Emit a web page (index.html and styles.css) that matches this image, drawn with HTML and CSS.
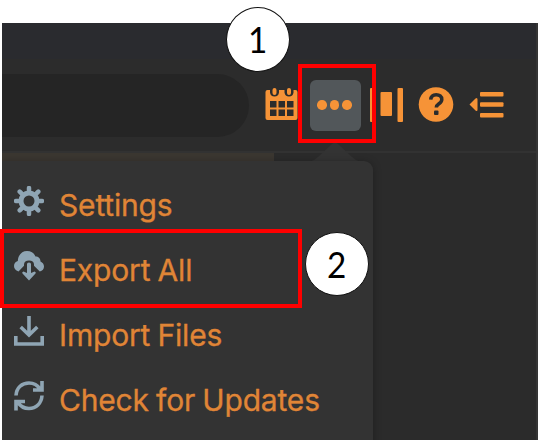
FILE: index.html
```html
<!DOCTYPE html>
<html lang="en">
<head>
<meta charset="utf-8">
<title>Toolbar menu</title>
<link rel="stylesheet" href="styles.css">
</head>
<body>
<div class="app">
  <div class="titlebar"></div>
  <header class="toolbar">
    <div class="search"></div>
    <svg class="icon calendar" width="34" height="36" viewBox="0 0 34 36">
      <path fill="#f69337" fill-rule="evenodd" d="M2.500 3H5v2.500q.5 4 4.500 4t4.500-4V3h5.500v2.500q.5 4 4.500 4t4.500-4V3h2q2 0 2 2v26q0 2-2 2h-28q-2 0-2-2V5q0-2 2-2zM5 14v6.500h6.500V14zM13.500 14v6.500h6.500V14zM22 14v6.500h6.500V14zM5 22.500v6.500h6.500v-6.500zM13.500 22.500v6.500h6.500v-6.500zM22 22.500v6.500h6.500v-6.500z"/>
      <path stroke="#f69337" stroke-width="4" stroke-linecap="round" d="M9.500 3v3M24 3v3"/>
    </svg>
    <button class="more" aria-label="More"><i></i><i></i><i></i></button>
    <svg class="icon panels" width="34" height="36" viewBox="0 0 34 36" fill="#f69337">
      <rect width="5" height="34" x="0" y="1" rx="1"/><rect width="11.500" height="24" x="10.500" y="5" rx="1"/><rect width="5.500" height="34" x="27.500" y="1" rx="1"/>
    </svg>
    <svg class="icon help" width="36" height="36" viewBox="0 0 36 36">
      <circle cx="18" cy="17.500" r="17.300" fill="#f69337"/>
      <path d="M12.700 12.700c.3-3.500 2.700-5 5.500-5 3.300 0 5.600 1.700 5.600 4.700 0 4.600-5.500 4.100-5.500 8.100" fill="none" stroke="#2b2c2d" stroke-width="3.500"/>
      <rect x="16" y="23.500" width="4.500" height="4.500" rx="1" fill="#2b2c2d"/>
    </svg>
    <svg class="icon outdent" width="36" height="36" viewBox="0 0 36 36" fill="#f69337">
      <path d="M.5 17.500 6.500 11.500q2-1.500 2 1v10q0 2.500-2 1z"/>
      <rect x="11" y="5" width="23.500" height="4.500" rx="1"/><rect x="11" y="15.300" width="23.500" height="4.500" rx="1"/><rect x="11" y="26" width="23.500" height="4.500" rx="1"/>
    </svg>
  </header>
  <div class="content"><div class="strip"></div></div>
  <svg class="arrow" width="52" height="21" viewBox="0 0 52 21"><path fill="#333" d="M0 21q5-1 9-5L23 3q3-3 6 0l14 13q4 4 9 5z"/></svg>
  <nav class="menu">
    <a class="item">
      <svg width="30" height="30" viewBox="0 0 30 30"><g stroke="#8fa5b4" fill="none"><circle cx="15" cy="15" r="8" stroke-width="5"/><path stroke-width="4.500" stroke-linecap="round" d="M15 2v4M15 24v4M2 15h4M24 15h4M5.700 5.700l3 3M21.300 21.300l3 3M24.300 5.700l-3 3M8.700 21.300l-3 3"/></g></svg>
      <span>Settings</span>
    </a>
    <a class="item">
      <svg width="30" height="30" viewBox="0 0 30 30" fill="#8fa5b4"><path d="M4.500 20.500C1.500 19.500 0 17.500 0 15c0-2.500 1.500-4.500 3.800-5C4 4 8 0 13 0c4 0 7 2 8.500 5.500 3 0 5 2 5 5 2.200 1 3.500 2.700 3.500 5 0 2.600-1.500 4.500-4.200 5L20 14.800v-1.200C20 11 18 9.500 15 9.500s-5 1.500-5 4.100v1.200z"/><path d="M13 13q0-1.500 2-1.500t2 1.500v9l3.500-1.500q2 .5 1 2L15 29.500 8.500 22.500q-1-1.500 1-2L13 22z"/></svg>
      <span>Export All</span>
    </a>
    <a class="item">
      <svg width="30" height="30" viewBox="0 0 30 30" fill="none" stroke="#8fa5b4" stroke-width="3.600"><path d="M15 0v18M6.700 11l8.300 8 8.300-8M1.800 20v8h26.400v-8"/></svg>
      <span>Import Files</span>
    </a>
    <a class="item">
      <svg width="30" height="30" viewBox="0 0 30 30" fill="none" stroke="#8fa5b4" stroke-width="3.600"><path d="M2 14.500C2.500 6.500 8 2 15 2c5 0 8.500 2 11 6M28 0v9h-9M28 14.500C27.500 22.500 22 27.500 15 27.500c-5 0-8.500-2-11-6M2 29.500v-9h9"/></svg>
      <span>Check for Updates</span>
    </a>
  </nav>
</div>
<div class="outline outline-more"></div>
<div class="outline outline-export"></div>
<div class="step step-one"><span>1</span></div>
<div class="step step-two"><span>2</span></div>
</body>
</html>
```
FILE: styles.css
```css
* { box-sizing: border-box; }
body {
  margin: 0;
  height: 440px;
  overflow: hidden;
  position: relative;
  background: #fff;
  font-family: Inter, sans-serif;
}
.app {
  position: relative;
  margin: 23px 0 0 2px;
  width: 536px;
  height: 417px;
  background: #2b2b2b;
  border-right: 2px solid #353535;
  overflow: hidden;
}
.titlebar { height: 36px; background: #2a2b2f; }
.toolbar {
  display: flex;
  align-items: center;
  height: 92px;
  background: #2c2c2c;
}
.search {
  width: 247px;
  height: 63px;
  border-radius: 0 32px 32px 0;
  background: #252525;
}
.icon { flex: none; display: block; }
.calendar { margin-left: 16px; }
.more {
  display: flex;
  align-items: center;
  justify-content: center;
  gap: 3px;
  width: 51px;
  height: 51px;
  margin-left: 10.500px;
  padding: 0 1px 0 0;
  border: 0;
  border-radius: 6px;
  background: #52575a;
}
.more i { width: 9.500px; height: 9.500px; border-radius: 50%; background: #f69337; }
.panels { margin-left: 9.500px; }
.help { margin-left: 13.500px; }
.outdent { margin-left: 15px; }
.content { height: 289px; border-top: 2px solid #323232; background: #2b2b2b; }
.strip { width: 272px; height: 8px; background: #3b3731; }
.arrow { position: absolute; left: 307px; top: 118px; }
.menu {
  position: absolute;
  left: 0;
  top: 138px;
  width: 371px;
  height: 290px;
  padding-top: 7px;
  border-radius: 0 9px 0 0;
  background: #333;
  box-shadow: 0 1px 9px rgba(0, 0, 0, .28);
}
.item {
  display: flex;
  align-items: center;
  gap: 15px;
  height: 65px;
  padding-left: 12px;
  color: #e08536;
  font-size: 30px;
  line-height: 36px;
  letter-spacing: -.18px;
  word-spacing: -1px;
  white-space: nowrap;
  -webkit-text-stroke: .3px #e08536;
}
.item svg { flex: none; overflow: hidden; }
.item span { padding-top: 8px; }
.outline { position: absolute; border: 4px solid #f00; }
.outline-more { left: 298px; top: 64px; width: 78px; height: 79px; }
.outline-export { left: 0; top: 229px; width: 302px; height: 79px; }
.step {
  position: absolute;
  display: flex;
  align-items: center;
  justify-content: center;
  width: 64px;
  height: 64px;
  padding-bottom: 2px;
  border: 1px solid #111;
  border-radius: 50%;
  background: #fff;
  color: #000;
  font-family: Lato, sans-serif;
  font-size: 37px;
  line-height: 1;
}
.step span { transform: scaleX(.9); }
.step-one { left: 226px; top: 7px; height: 65px; }
.step-two { left: 305px; top: 232px; }
```
